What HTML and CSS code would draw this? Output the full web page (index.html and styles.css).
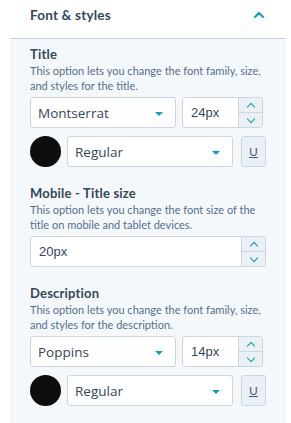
FILE: index.html
```html
<!DOCTYPE html>
<html lang="en">
<head>
  <meta charset="UTF-8">
  <meta name="viewport" content="width=device-width, initial-scale=1">
  <title>Font &amp; styles</title>
  <link rel="stylesheet" href="styles.css">
</head>
<body>
  <div class="panel">
    <!-- Encabezado del grupo -->
    <div class="panel-header">
      <span class="panel-title">Font &amp; styles</span>
      <svg class="panel-toggle" viewBox="0 0 10 6" width="10" height="6">
        <path d="M1 5 L5 1 L9 5" fill="none" stroke="#00a4bd" stroke-width="2" stroke-linecap="round" stroke-linejoin="round" />
      </svg>
    </div>

    <div class="panel-body">
      <!-- Título -->
      <div class="field">
        <div class="field-label">Title</div>
        <p class="field-help">This option lets you change the font family, size, and styles for the title.</p>
        <div class="row row-font">
          <div class="select font-montserrat">Montserrat<i class="caret"></i></div>
          <div class="number number-short">
            <span class="number-value">24px</span>
            <div class="stepper">
              <span class="step step-up"></span>
              <span class="step step-down"></span>
            </div>
          </div>
        </div>
        <div class="row row-style">
          <span class="swatch"></span>
          <div class="select font-montserrat">Regular<i class="caret"></i></div>
          <span class="underline-btn">U</span>
        </div>
      </div>

      <!-- Tamaño en móvil -->
      <div class="field">
        <div class="field-label">Mobile - Title size</div>
        <p class="field-help">This option lets you change the font size of the title on mobile and tablet devices.</p>
        <div class="number number-full">
          <span class="number-value">20px</span>
          <div class="stepper">
            <span class="step step-up"></span>
            <span class="step step-down"></span>
          </div>
        </div>
      </div>

      <!-- Descripción -->
      <div class="field">
        <div class="field-label">Description</div>
        <p class="field-help">This option lets you change the font family, size, and styles for the description.</p>
        <div class="row row-font">
          <div class="select font-poppins">Poppins<i class="caret"></i></div>
          <div class="number number-short">
            <span class="number-value">14px</span>
            <div class="stepper">
              <span class="step step-up"></span>
              <span class="step step-down"></span>
            </div>
          </div>
        </div>
        <div class="row row-style">
          <span class="swatch"></span>
          <div class="select font-poppins">Regular<i class="caret"></i></div>
          <span class="underline-btn">U</span>
        </div>
      </div>
    </div>
  </div>
</body>
</html>
```

FILE: styles.css
```css
/* Reinicio global */
* {
  margin: 0;
  padding: 0;
  box-sizing: border-box;
}

body {
  background: #fff;
  font-family: Lato, "Noto Sans", sans-serif;
  color: #33475b;
}

.panel {
  width: 276px;
  margin-left: 10px;
}

/* Encabezado */
.panel-header {
  height: 39px;
  padding: 0 22px 8px 20px;
  display: flex;
  align-items: center;
  justify-content: space-between;
  border-bottom: 1px solid #cbd6e2;
}

.panel-title {
  font-size: 13.5px;
  font-weight: 700;
  letter-spacing: 0.2px;
}

.panel-toggle {
  display: block;
}

/* Cuerpo con fondo gris */
.panel-body {
  background: #f5f8fa;
  padding: 6px 20px 30px;
  min-height: 384px;
}

.field + .field {
  margin-top: 17px;
}

.field-label {
  font-size: 13px;
  font-weight: 700;
  line-height: 18px;
  letter-spacing: 0.2px;
}

.field-help {
  font-size: 11px;
  line-height: 15px;
  color: #516f90;
  margin-bottom: 4px;
}

.row {
  display: flex;
  align-items: center;
}

.row + .row {
  margin-top: 8px;
}

.select,
.number,
.underline-btn {
  height: 31px;
  border: 1px solid #cbd6e2;
  border-radius: 3px;
  background: #fff;
}

.select {
  position: relative;
  display: flex;
  align-items: center;
  padding-left: 7px;
  font-size: 13.5px;
  color: #33475b;
}

.font-montserrat {
  font-family: "Open Sans", sans-serif;
}

.font-poppins {
  font-family: "Open Sans", sans-serif;
}

.caret {
  position: absolute;
  right: 12px;
  top: 14px;
  border-left: 4px solid transparent;
  border-right: 4px solid transparent;
  border-top: 4px solid #00a4bd;
}

.row-font .select {
  width: 146px;
  margin-right: 6px;
}

.number {
  display: flex;
  overflow: hidden;
}

.number-short {
  width: 81px;
}

.number-full {
  width: 236px;
}

.number-value {
  flex: 1;
  display: flex;
  align-items: center;
  padding-left: 8px;
  font-family: "Liberation Sans", Arial, sans-serif;
  font-size: 13px;
}

.stepper {
  width: 24px;
  display: flex;
  flex-direction: column;
  border-left: 1px solid #cbd6e2;
  background: #eaf0f6;
}

.step {
  flex: 1;
  position: relative;
}

.step-up {
  border-bottom: 1px solid #cbd6e2;
}

.step::after {
  content: "";
  position: absolute;
  left: 9px;
  width: 5px;
  height: 5px;
  border-left: 1.5px solid #00a4bd;
  border-top: 1.5px solid #00a4bd;
}

.step-up::after {
  top: 6px;
  transform: rotate(45deg);
}

.step-down::after {
  top: 3px;
  transform: rotate(-135deg);
}

.swatch {
  width: 31px;
  height: 31px;
  border-radius: 50%;
  background: #0d0d0d;
  margin-right: 6px;
}

.row-style .select {
  width: 166px;
  margin-right: 8px;
}

.underline-btn {
  width: 25px;
  display: flex;
  align-items: center;
  justify-content: center;
  background: #eaf0f6;
  font-size: 12px;
  text-decoration: underline;
  color: #425b76;
}
```
